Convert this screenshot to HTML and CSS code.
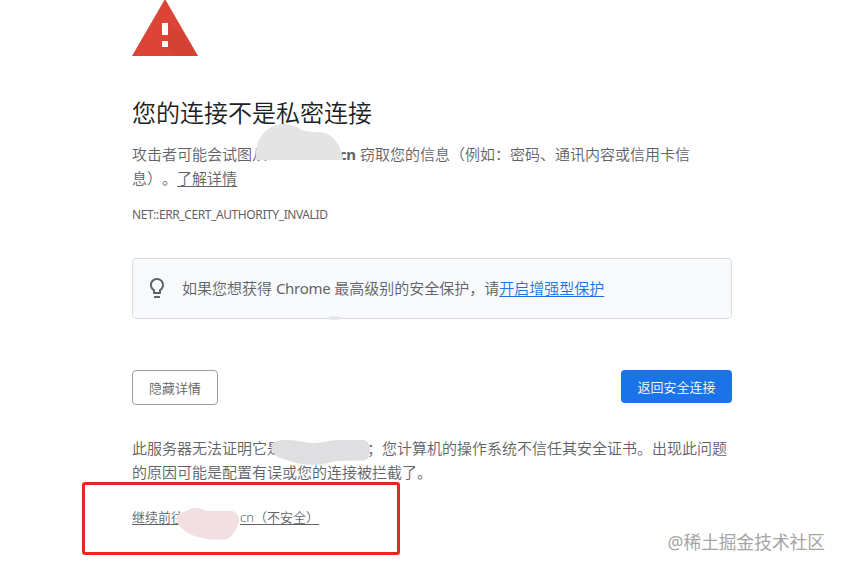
FILE: index.html
```
<!DOCTYPE html>
<html lang="zh-CN">
<head>
    <meta charset="UTF-8">
    <meta name="viewport" content="width=device-width, initial-scale=1.0">
    <title>隐私设置错误</title>
    <link rel="stylesheet" href="styles.css">
</head>
<body>
    <div class="container">
        <svg class="warning" width="66" height="56" viewBox="0 0 66 56">
            <path d="M33 -1 L66 56 H0 Z" fill="#db4437"/>
            <path d="M36 23 L55 37 L66 56 H44 L30 47 L36 41 Z" fill="#c53d32" opacity="0.3"/>
            <rect x="30" y="23" width="6" height="12" fill="#fff"/>
            <rect x="30" y="41" width="6" height="6" fill="#fff"/>
        </svg>
        <h1>您的连接不是私密连接</h1>
        <p class="message">攻击者可能会试图从<span class="domain"></span><b>cn</b> 窃取您的信息（例如：密码、通讯内容或信用卡信<br>息）。<a href="#">了解详情</a></p>
        <div class="error-code">NET::ERR_CERT_AUTHORITY_INVALID</div>

        <div class="promo">
            <svg width="24" height="24" viewBox="0 0 24 24" fill="#5f6368">
                <path d="M9 21c0 .55.45 1 1 1h4c.55 0 1-.45 1-1v-1H9v1zm3-19C8.140 2 5 5.140 5 9c0 2.380 1.190 4.470 3 5.740V17c0 .55.45 1 1 1h6c.55 0 1-.45 1-1v-2.260c1.810-1.270 3-3.360 3-5.740 0-3.860-3.140-7-7-7zm2.850 11.100l-.85.6V16h-4v-2.300l-.85-.6C7.800 12.160 7 10.630 7 9c0-2.760 2.240-5 5-5s5 2.240 5 5c0 1.630-.8 3.160-2.150 4.100z"/>
            </svg>
            <p>如果您想获得 <span class="latin">Chrome</span> 最高级别的安全保护，请<a href="#">开启增强型保护</a></p>
        </div>

        <div class="buttons">
            <button class="details">隐藏详情</button>
            <button class="primary">返回安全连接</button>
        </div>

        <p class="explain">此服务器无法证明它是<span class="domain"></span>；您计算机的操作系统不信任其安全证书。出现此问题<br>的原因可能是配置有误或您的连接被拦截了。</p>
        <p class="proceed"><a href="#">继续前往<span class="domain"></span>cn（不安全）</a></p>
    </div>

    <!-- hand-drawn smudges over the domain name -->
    <svg class="smudges" width="842" height="570" viewBox="0 0 842 570">
        <path d="M256 160 C254 140 266 124 284 124 C292 124 297 127 302 130 C310 133 318 131 325 133 C335 136 342 148 343 160 Z" fill="#e4e4e4"/>
        <path d="M272 444 C276 439 290 439 304 442 C320 445 326 440 338 440 H364 C372 442 371 458 366 460 C352 462 338 459 328 463 C314 467 296 464 284 459 C274 457 270 450 272 444 Z" fill="#dfdee0"/>
        <path d="M177 516 C180 512 186 512 190 509 C196 506 202 509 207 511 H232 C238 512 240 518 239 523 C236 530 233 536 227 539 C216 541 202 539 192 535 C184 532 173 522 177 516 Z" fill="#f2dfe1"/>
        <path d="M325 318 Q334 314 343 318 Q334 322 325 318 Z" fill="#e4e6e8"/>
    </svg>
    <div class="frame"></div>
    <div class="watermark">@稀土掘金技术社区</div>
</body>
</html>
```

FILE: styles.css
```
* {
    margin: 0;
    padding: 0;
    box-sizing: border-box;
}
body {
    position: relative;
    height: 570px;
    overflow: hidden;
    background-color: #fff;
    color: #5f6368;
    font-family: "Noto Sans", "Noto Sans CJK SC", sans-serif;
    font-size: 15px;
    font-weight: 350;
    line-height: 24px;
    text-spacing-trim: space-all;
}
a {
    color: inherit;
    text-underline-offset: 2px;
}
.container {
    width: 600px;
    margin-left: 132px;
}
.warning {
    display: block;
}
h1 {
    margin-top: 41px;
    color: #202124;
    font-size: 24px;
    font-weight: 350;
    line-height: 32px;
}
.message {
    margin-top: 13px;
    white-space: nowrap;
}
.domain {
    display: inline-block;
}
.message .domain {
    width: 72px;
}
.message b {
    display: inline-block;
    width: 17px;
    font-weight: 700;
    letter-spacing: -0.5px;
}
.error-code {
    margin-top: 16px;
    font-size: 12px;
    font-weight: 400;
    line-height: 18px;
    letter-spacing: -0.4px;
}
.promo {
    display: flex;
    align-items: center;
    gap: 13px;
    height: 61px;
    margin-top: 34px;
    padding: 0 0 2px 12px;
    border: 1px solid #dadce0;
    border-radius: 4px;
    background-color: #f8fafc;
    white-space: nowrap;
}
.promo a {
    color: #1a73e8;
}
.latin {
    font-weight: 400;
    letter-spacing: -0.3px;
}
.buttons {
    display: flex;
    justify-content: space-between;
    align-items: flex-start;
    margin-top: 51px;
}
button {
    border-radius: 4px;
    font-family: inherit;
    font-size: 13px;
    font-weight: 350;
}
.details {
    width: 86px;
    height: 35px;
    border: 1px solid #9aa0a6;
    background-color: #fff;
    color: #5f6368;
}
.primary {
    width: 111px;
    height: 33px;
    border: none;
    background-color: #1a73e8;
    color: #fff;
}
.explain {
    margin-top: 31px;
    white-space: nowrap;
}
.explain .domain {
    width: 85px;
}
.proceed {
    margin-top: 23px;
    font-size: 13px;
    line-height: 20px;
}
.proceed .domain {
    width: 56px;
}
.smudges {
    position: absolute;
    top: 0;
    left: 0;
}
.frame {
    position: absolute;
    top: 482px;
    left: 82px;
    width: 318px;
    height: 73px;
    border: 3px solid #e8281e;
    border-radius: 3px;
}
.watermark {
    position: absolute;
    right: 17px;
    bottom: 16px;
    color: #a5a5a5;
    font-size: 17.7px;
    font-weight: 400;
}
```
